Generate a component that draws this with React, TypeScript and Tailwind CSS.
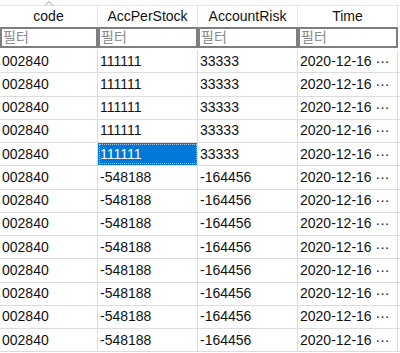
import React from "react";

type Row = { code: string; acc: string; risk: string; time: string };

const rows: Row[] = [
  ...Array.from({ length: 5 }, () => ({ code: "002840", acc: "111111", risk: "33333", time: "2020-12-16 ···" })),
  ...Array.from({ length: 8 }, () => ({ code: "002840", acc: "-548188", risk: "-164456", time: "2020-12-16 ···" })),
];

const cols = ["code", "AccPerStock", "AccountRisk", "Time"];
const widths = ["w-[98px]", "w-[100px]", "w-[100px]", "w-[100px]"];

export default function App() {
  return (
    <div
      className="w-[400px] h-[353px] overflow-hidden bg-white text-[14px] text-[#111]"
      style={{ fontFamily: '"Liberation Sans", "Noto Sans CJK KR", sans-serif' }}
    >
      <div className="pt-[5px]">
        {/* header */}
        <div className="flex h-[22px] border-t border-[#e5e5e5]">
          {cols.map((c, i) => (
            <div
              key={c}
              className={`${widths[i]} relative flex items-center justify-center border-r border-[#e5e5e5]`}
            >
              {i == 0 && (
                <svg
                  className="absolute -top-[5px] left-1/2 -translate-x-1/2"
                  width="9"
                  height="5"
                  viewBox="0 0 9 5"
                >
                  <path d="M0.5 4.5 L4.5 0.5 L8.5 4.5" fill="none" stroke="#9a9a9a" strokeWidth="1" />
                </svg>
              )}
              {c}
            </div>
          ))}
        </div>
        {/* filter row */}
        <div className="flex h-[21px]">
          {cols.map((c, i) => (
            <div key={c} className={`${widths[i]} border-2 border-[#7f7f7f] flex items-center px-[1px] text-[#8a8a8a]`}>
              필터
            </div>
          ))}
        </div>
        <div className="h-[2px]" />
        {/* data */}
        {rows.map((r, ri) => (
          <div key={ri} className="flex h-[23.25px] border-b border-[#dcdcdc]">
            {[r.code, r.acc, r.risk, r.time].map((v, ci) => {
              const selected = ri == 4 && ci == 1;
              return (
                <div
                  key={ci}
                  className={
                    `${widths[ci]} flex items-center px-[2px] border-r border-[#dcdcdc] whitespace-nowrap overflow-hidden ` +
                    (selected ? "bg-[#0078d7] text-white outline-1 outline-dotted outline-offset-[-2px] outline-[#9cc8f0]" : "")
                  }
                >
                  {v}
                </div>
              );
            })}
          </div>
        ))}
      </div>
    </div>
  );
}
